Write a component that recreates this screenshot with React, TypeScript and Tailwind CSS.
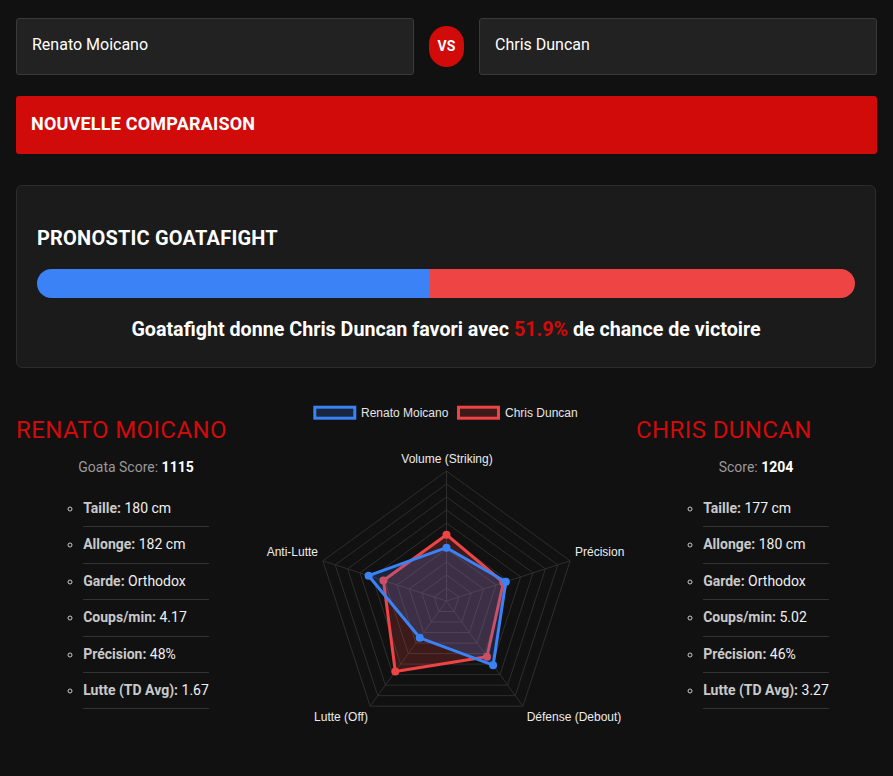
import React from "react";

const R = 130;
const CX = 190.5;
const CY = 207;
const labels = ["Volume (Striking)", "Précision", "Défense (Debout)", "Lutte (Off)", "Anti-Lutte"];
const blue = [41, 48, 61, 35, 63];
const red = [51, 46, 53, 67, 51];

function pt(i: number, v: number): [number, number] {
  const a = ((-90 + 72 * i) * Math.PI) / 180;
  return [CX + R * v * Math.cos(a), CY + R * v * Math.sin(a)];
}

function poly(vals: number[]) {
  return vals.map((v, i) => pt(i, v).join(",")).join(" ");
}

function Radar() {
  const rings = Array.from({ length: 10 }, (_, k) => (k + 1) / 10);
  return (
    <svg width="380" height="340" viewBox="0 0 380 340" className="block">
      {/* legend */}
      <rect x="58.8" y="13.2" width="40" height="11" fill="rgba(59,130,246,0.2)" stroke="#3b82f6" strokeWidth="3" />
      <text x="105" y="23" fill="#e5e5e5" fontSize="12" fontFamily="'Liberation Sans', Arial, sans-serif">Renato Moicano</text>
      <rect x="202.5" y="13.2" width="40" height="11" fill="rgba(239,68,68,0.2)" stroke="#ef4444" strokeWidth="3" />
      <text x="249" y="23" fill="#e5e5e5" fontSize="12" fontFamily="'Liberation Sans', Arial, sans-serif">Chris Duncan</text>
      {/* grid */}
      {rings.map((r) => (
        <polygon key={r} points={poly([r, r, r, r, r])} fill="none" stroke="#2e2e2e" strokeWidth="1" />
      ))}
      {labels.map((_, i) => {
        const [x, y] = pt(i, 1);
        return <line key={i} x1={CX} y1={CY} x2={x} y2={y} stroke="#2e2e2e" strokeWidth="1" />;
      })}
      {/* datasets */}
      <polygon points={poly(red.map((v) => v / 100))} fill="rgba(239,68,68,0.2)" stroke="#ef4444" strokeWidth="3" strokeLinejoin="round" />
      {red.map((v, i) => {
        const [x, y] = pt(i, v / 100);
        return <circle key={i} cx={x} cy={y} r="4" fill="#ef4444" />;
      })}
      <polygon points={poly(blue.map((v) => v / 100))} fill="rgba(59,130,246,0.2)" stroke="#3b82f6" strokeWidth="3" strokeLinejoin="round" />
      {blue.map((v, i) => {
        const [x, y] = pt(i, v / 100);
        return <circle key={i} cx={x} cy={y} r="4" fill="#3b82f6" />;
      })}
      {/* labels */}
      <g fill="#ececec" fontSize="12" fontFamily="'Liberation Sans', Arial, sans-serif">
        <text x="191" y="69" textAnchor="middle">Volume (Striking)</text>
        <text x="319" y="162" textAnchor="start">Précision</text>
        <text x="62" y="162" textAnchor="end">Anti-Lutte</text>
        <text x="85" y="327" textAnchor="middle">Lutte (Off)</text>
        <text x="318" y="327" textAnchor="middle">Défense (Debout)</text>
      </g>
    </svg>
  );
}

type Stat = [string, string];

function Fighter({ name, scoreLabel, score, stats }: { name: string; scoreLabel: string; score: string; stats: Stat[] }) {
  return (
    <div className="w-[240px] shrink-0 pt-[22px]">
      <h2 className="text-[24px] leading-[28px] text-[#d10a0a] tracking-[0.4px] font-normal">{name}</h2>
      <p className="mt-[12px] text-center text-[14px] leading-[22px] text-[#9a9a9a]">
        {scoreLabel} <span className="font-bold text-white">{score}</span>
      </p>
      <div className="flex justify-center mt-[13px]">
        <ul className="list-[circle] pl-5 text-[14px] text-[#c9c9c9]">
          {stats.map(([k, v]) => (
            <li key={k} className="py-[7px] leading-[21.4px] border-b border-[#333]">
              <span className="font-bold text-[#c9c9c9]">{k}:</span> <span className="text-[#f0f0f0]">{v}</span>
            </li>
          ))}
        </ul>
      </div>
    </div>
  );
}

export default function App() {
  return (
    <div className="min-h-[776px] bg-[#111111] px-4 pt-[18px] pb-10 text-white" style={{ fontFamily: "Roboto, 'Noto Sans', sans-serif" }}>
      <div className="flex items-center gap-[15px]">
        <div className="flex-1 h-[57px] flex items-center px-[15px] pb-[3px] bg-[#222] border border-[#3a3a3a] rounded-[3px] text-[16px]">Renato Moicano</div>
        <div className="w-[35px] h-[41px] rounded-full bg-[#d10a0a] flex items-center justify-center text-[14px] font-bold">VS</div>
        <div className="flex-1 h-[57px] flex items-center px-[15px] pb-[3px] bg-[#222] border border-[#3a3a3a] rounded-[3px] text-[16px]">Chris Duncan</div>
      </div>
      <button className="mt-[21px] w-full h-[58px] bg-[#d10a0a] rounded-[3px] text-left px-[15px] pb-[3px] text-[18px] tracking-[0.2px] font-bold uppercase text-white">
        Nouvelle comparaison
      </button>
      <div className="mt-[31px] w-[860px] bg-[#1b1b1b] border border-[#2c2c2c] rounded-[6px] px-5 pt-[38px] pb-[23px]">
        <h3 className="text-[20px] leading-[28px] tracking-[0.2px] font-bold uppercase">Pronostic Goatafight</h3>
        <div className="mt-[17px] h-[29px] rounded-full overflow-hidden flex">
          <div className="h-full bg-[#3b82f6]" style={{ width: "48.1%" }} />
          <div className="h-full flex-1 bg-[#ef4444]" />
        </div>
        <p className="mt-[18px] text-center text-[19.7px] leading-[28px] font-bold">
          Goatafight donne Chris Duncan favori avec <span className="text-[#d10a0a]">51.9%</span> de chance de victoire
        </p>
      </div>
      <div className="mt-[26px] flex w-[860px]">
        <Fighter
          name="RENATO MOICANO"
          scoreLabel="Goata Score:"
          score="1115"
          stats={[["Taille", "180 cm"], ["Allonge", "182 cm"], ["Garde", "Orthodox"], ["Coups/min", "4.17"], ["Précision", "48%"], ["Lutte (TD Avg)", "1.67"]]}
        />
        <div className="flex-1 flex justify-center">
          <Radar />
        </div>
        <Fighter
          name="CHRIS DUNCAN"
          scoreLabel="Score:"
          score="1204"
          stats={[["Taille", "177 cm"], ["Allonge", "180 cm"], ["Garde", "Orthodox"], ["Coups/min", "5.02"], ["Précision", "46%"], ["Lutte (TD Avg)", "3.27"]]}
        />
      </div>
    </div>
  );
}
